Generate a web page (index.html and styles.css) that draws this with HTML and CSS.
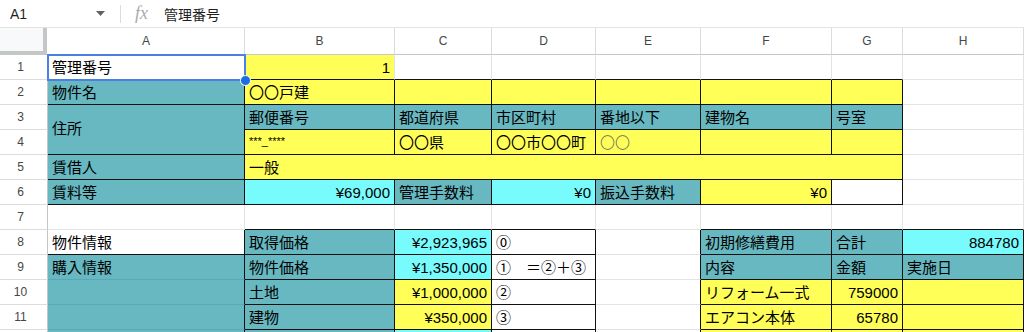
FILE: index.html
```html
<!DOCTYPE html>
<html lang="ja">
<head>
<meta charset="utf-8">
<title>Sheet</title>
<link rel="stylesheet" href="styles.css">
</head>
<body>
<div class="fbar">
  <div class="namebox">A1</div>
  <svg class="dd" width="9" height="5" viewBox="0 0 9 5"><path d="M0 0h9L4.5 5z" fill="#5f6368"/></svg>
  <div class="sep"></div>
  <div class="fx">fx</div>
  <div class="ftext">管理番号</div>
</div>
<div class="sheet">
  <div class="corner"></div>
  <div class="ch">A</div><div class="ch">B</div><div class="ch">C</div><div class="ch">D</div><div class="ch">E</div><div class="ch">F</div><div class="ch">G</div><div class="ch">H</div>

  <div class="rh">1</div>
  <div class="c sel kb">管理番号</div>
  <div class="c y num kb">1</div>
  <div class="c kb"></div><div class="c kb"></div><div class="c kb"></div><div class="c kb"></div><div class="c kb"></div>
  <div class="c"></div>

  <div class="rh">2</div>
  <div class="c t kb kr">物件名</div>
  <div class="c y kb kr">〇〇戸建</div>
  <div class="c y kb kr"></div><div class="c y kb kr"></div><div class="c y kb kr"></div><div class="c y kb kr"></div><div class="c y kb kr"></div>
  <div class="c"></div>

  <div class="rh">3</div>
  <div class="c t kb kr span2r mid">住所</div>
  <div class="c t kb kr">郵便番号</div>
  <div class="c t kb kr">都道府県</div>
  <div class="c t kb kr">市区町村</div>
  <div class="c t kb kr">番地以下</div>
  <div class="c t kb kr">建物名</div>
  <div class="c t kb kr">号室</div>
  <div class="c"></div>

  <div class="rh">4</div>
  <div class="c y kb kr small">***_****</div>
  <div class="c y kb kr">〇〇県</div>
  <div class="c y kb kr">〇〇市〇〇町</div>
  <div class="c y kb kr thin">〇〇</div>
  <div class="c y kb kr"></div>
  <div class="c y kb kr"></div>
  <div class="c"></div>

  <div class="rh">5</div>
  <div class="c t kb kr">賃借人</div>
  <div class="c y kb kr span6">一般</div>
  <div class="c"></div>

  <div class="rh">6</div>
  <div class="c t kb kr">賃料等</div>
  <div class="c cy kb kr num">¥69,000</div>
  <div class="c t kb kr">管理手数料</div>
  <div class="c cy kb kr num">¥0</div>
  <div class="c t kb kr">振込手数料</div>
  <div class="c y kb kr num">¥0</div>
  <div class="c kb kr"></div>
  <div class="c"></div>

  <div class="rh">7</div>
  <div class="c"></div>
  <div class="c kb"></div><div class="c kb"></div><div class="c kb"></div>
  <div class="c"></div>
  <div class="c kb"></div><div class="c kb"></div><div class="c kb"></div>

  <div class="rh">8</div>
  <div class="c kb kr">物件情報</div>
  <div class="c t kb kr">取得価格</div>
  <div class="c cy kb kr num">¥2,923,965</div>
  <div class="c kb kr">⓪</div>
  <div class="c kr"></div>
  <div class="c t kb kr">初期修繕費用</div>
  <div class="c t kb kr">合計</div>
  <div class="c cy kb kr num">884780</div>

  <div class="rh">9</div>
  <div class="c t kr fb">購入情報</div>
  <div class="c t kb kr">物件価格</div>
  <div class="c cy kb kr num">¥1,350,000</div>
  <div class="c kb kr">①　＝②＋③</div>
  <div class="c kr"></div>
  <div class="c t kb kr">内容</div>
  <div class="c t kb kr">金額</div>
  <div class="c t kb kr">実施日</div>

  <div class="rh">10</div>
  <div class="c t kr fb"></div>
  <div class="c t kb kr">土地</div>
  <div class="c y kb kr num">¥1,000,000</div>
  <div class="c kb kr">②</div>
  <div class="c kr"></div>
  <div class="c y kb kr">リフォーム一式</div>
  <div class="c y kb kr num">759000</div>
  <div class="c y kb kr"></div>

  <div class="rh">11</div>
  <div class="c t kr fb"></div>
  <div class="c t kb kr">建物</div>
  <div class="c y kb kr num">¥350,000</div>
  <div class="c kb kr">③</div>
  <div class="c kr"></div>
  <div class="c y kb kr">エアコン本体</div>
  <div class="c y kb kr num">65780</div>
  <div class="c y kb kr"></div>

  <div class="rh"></div>
  <div class="c t kr fb"></div>
  <div class="c t kb kr"></div>
  <div class="c cy kb kr"></div>
  <div class="c kb kr"></div>
  <div class="c kr"></div>
  <div class="c y kb kr"></div>
  <div class="c y kb kr"></div>
  <div class="c y kb kr"></div>
</div>
</body>
</html>
```
FILE: styles.css
```css
html, body {
  margin: 0;
  padding: 0;
  background: #fff;
  overflow: hidden;
  width: 1024px;
  height: 332px;
}
body {
  font-family: "Liberation Sans", "Noto Sans CJK JP", sans-serif;
  color: #000;
}
.fbar {
  height: 27px;
  border-bottom: 1px solid #e1e3e1;
  display: flex;
  align-items: center;
  box-sizing: content-box;
  margin-top: -5px;
  padding-top: 5px;
}
.namebox {
  margin-left: 10px;
  width: 86px;
  font-size: 14px;
  color: #1f1f1f;
  font-family: "Liberation Sans", "Noto Sans CJK JP", sans-serif;
}
.dd {
  display: block;
}
.sep {
  width: 1px;
  height: 18px;
  background: #dadce0;
  margin-left: 15px;
}
.fx {
  margin-left: 14px;
  font-family: "Liberation Serif", serif;
  font-style: italic;
  font-size: 18px;
  color: #a8aaad;
  width: 29px;
}
.ftext {
  font-size: 14px;
  color: #1f1f1f;
  font-family: "Noto Sans CJK JP", sans-serif;
}
.sheet {
  display: grid;
  grid-template-columns: 48px 197px 150px 97px 104px 105px 131px 71px 121px;
  grid-template-rows: 27px repeat(12, 25px);
}
.corner {
  background: #f8f9fa;
  border-right: 4px solid #c4c7c5;
  border-bottom: 4px solid #c4c7c5;
  box-sizing: border-box;
  margin-right: 1px;
}
.ch {
  background: #fff;
  border-right: 1px solid #dadce0;
  border-bottom: 1px solid #c4c7c5;
  box-sizing: border-box;
  display: flex;
  align-items: center;
  justify-content: center;
  font-size: 12px;
  color: #444746;
}
.rh {
  border-right: 1px solid #c4c7c5;
  border-bottom: 1px solid #dadce0;
  box-sizing: border-box;
  display: flex;
  align-items: center;
  justify-content: center;
  padding-right: 6px;
  font-size: 12px;
  color: #444746;
}
.c {
  box-sizing: border-box;
  border-right: 1px solid #e2e3e3;
  border-bottom: 1px solid #e2e3e3;
  font-size: 15px;
  line-height: 20px;
  padding: 0 4px 1px 4px;
  display: flex;
  align-items: flex-end;
  white-space: nowrap;
  overflow: hidden;
}
.t { background: #67b8c1; }
.y { background: #ffff57; }
.cy { background: #77fbfd; }
.kb { border-bottom-color: #111; }
.kr { border-right-color: #111; }
.fb { border-bottom-color: #5aa8b1; }
.num { justify-content: flex-end; }
.mid { align-items: center; }
.span2r { grid-row: span 2; }
.span6 { grid-column: span 6; }
.small { font-size: 11px; padding-bottom: 3px; }
.thin { color: #666; font-weight: 300; }
.sel {
  position: relative;
  overflow: visible;
}
.sel::before {
  content: "";
  position: absolute;
  left: -1px;
  top: -1px;
  right: -2px;
  bottom: -2px;
  border: 2px solid #4b7fe3;
  pointer-events: none;
}
.sel::after {
  content: "";
  position: absolute;
  right: -7px;
  bottom: -7px;
  width: 9px;
  height: 9px;
  border-radius: 50%;
  background: #1b6fe0;
  border: 1px solid #fff;
  z-index: 2;
}
```
